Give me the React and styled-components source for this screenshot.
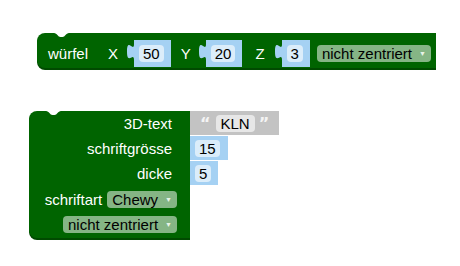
import React from "react";
import styled, { createGlobalStyle } from "styled-components";

const Global = createGlobalStyle`
  html, body { margin: 0; padding: 0; background: #ffffff; }
  body { font-family: "Liberation Sans", Arial, sans-serif; }
`;

const GREEN = "#006400";
const GREEN_SHADOW = "#004a00";
const BLUE = "#a5d1f3";
const GRAY = "#c3c3c3";

const Canvas = styled.div`
  position: relative;
  width: 460px;
  height: 266px;
  overflow: hidden;
`;

const BlockPos = styled.div`
  position: absolute;
  left: ${(p) => p.$x}px;
  top: ${(p) => p.$y}px;
`;

const GreenBlock = styled.div`
  position: relative;
  background: ${GREEN};
  border-radius: 8px 0 0 8px;
  box-shadow: 0 2px 0 ${GREEN_SHADOW};
  color: #fff;
  font-size: 15px;
`;

const NotchSvg = styled.svg`
  position: absolute;
  top: 0;
  left: ${(p) => p.$offset}px;
  display: block;
`;

const Notch = ({ offset }) => (
  <NotchSvg $offset={offset} width="15" height="5" viewBox="0 0 15 5">
    <path d="M0 0 C3 0 4 4 6.5 4 L8.5 4 C11 4 12 0 15 0 Z" fill="#ffffff" />
  </NotchSvg>
);

const InlineRow = styled.div`
  display: flex;
  align-items: center;
  height: 35px;
  padding: 6px 5px 1px 11px;
  box-sizing: border-box;
`;

const Label = styled.span`
  display: inline-block;
  margin-left: ${(p) => p.$ml || 0}px;
  color: #fff;
  font-size: 15px;
  line-height: 17px;
  white-space: nowrap;
`;

const Slot = styled.div`
  display: flex;
  align-items: flex-start;
  margin-left: ${(p) => p.$ml || 0}px;
  flex-shrink: 0;
`;

const TabSvg = styled.svg`
  display: block;
  margin-top: 4px;
  flex-shrink: 0;
`;

const Tab = ({ color }) => (
  <TabSvg width="7" height="16" viewBox="0 0 7 16">
    <path d="M7 0 C7 9 0 -7 0 7.5 S7 7 7 16 Z" fill={color} />
  </TabSvg>
);

const ValueBody = styled.div`
  display: flex;
  align-items: center;
  height: ${(p) => p.$h}px;
  padding: 0 ${(p) => p.$pr}px 0 ${(p) => p.$pl}px;
  background: ${(p) => p.$bg};
  box-sizing: border-box;
  color: #000;
`;

const EditField = styled.span`
  display: inline-flex;
  align-items: center;
  height: 17px;
  padding: 0 ${(p) => p.$px || 4}px;
  border-radius: 4px;
  background: rgba(255, 255, 255, 0.6);
  color: #000;
  font-size: 15px;
  line-height: 17px;
  white-space: nowrap;
`;

const Quote = styled.span`
  display: inline-block;
  color: #f4f4f4;
  font-family: "DejaVu Sans", "Liberation Sans", sans-serif;
  font-size: 16px;
  font-weight: bold;
  line-height: 17px;
  height: 17px;
  margin: 0 ${(p) => p.$mr || 0}px 0 ${(p) => p.$ml || 0}px;
`;

const Dropdown = styled.span`
  display: inline-flex;
  align-items: center;
  height: 17px;
  padding: 0 5px 0 5px;
  margin-left: ${(p) => p.$ml || 0}px;
  border-radius: 4px;
  background: rgba(255, 255, 255, 0.52);
  color: #000;
  font-size: 15px;
  line-height: 17px;
  white-space: nowrap;
  flex-shrink: 0;
`;

const Arrow = styled.span`
  margin-left: 7px;
  font-size: 7px;
  line-height: 17px;
  color: #e8f3e8;
`;

const NumberBlock = ({ value, ml, h = 27, pl = 5, pr = 7 }) => (
  <Slot $ml={ml}>
    <Tab color={BLUE} />
    <ValueBody $bg={BLUE} $h={h} $pl={pl} $pr={pr}>
      <EditField>{value}</EditField>
    </ValueBody>
  </Slot>
);

const Drop = ({ children, ml }) => (
  <Dropdown $ml={ml}>
    {children}
    <Arrow>▼</Arrow>
  </Dropdown>
);

/* block 2 */
const TextBlock = styled.div`
  display: flex;
  align-items: flex-start;
`;

const GreenPanel = styled(GreenBlock)`
  width: 161px;
  padding-bottom: 1px;
  display: flex;
  flex-direction: column;
`;

const PanelRow = styled.div`
  display: flex;
  align-items: center;
  justify-content: flex-end;
  height: ${(p) => p.$h}px;
  padding-right: ${(p) => p.$pr}px;
  box-sizing: border-box;
`;

const Children = styled.div`
  display: flex;
  flex-direction: column;
  gap: 1px;
  margin-left: -7px;
`;

export default function App() {
  return (
    <>
      <Global />
      <Canvas>
        <BlockPos $x={37} $y={33}>
          <GreenBlock>
            <Notch offset={17} />
            <InlineRow>
              <Label>würfel</Label>
              <Label $ml={20}>X</Label>
              <NumberBlock value="50" ml={9} />
              <Label $ml={10}>Y</Label>
              <NumberBlock value="20" ml={8} />
              <Label $ml={13}>Z</Label>
              <NumberBlock value="3" ml={10} />
              <Drop ml={7}>nicht zentriert</Drop>
            </InlineRow>
          </GreenBlock>
        </BlockPos>

        <BlockPos $x={29} $y={111}>
          <TextBlock>
            <GreenPanel>
              <Notch offset={17} />
              <PanelRow $h={25} $pr={18}>
                <Label>3D-text</Label>
              </PanelRow>
              <PanelRow $h={25} $pr={18}>
                <Label>schriftgrösse</Label>
              </PanelRow>
              <PanelRow $h={25} $pr={18}>
                <Label>dicke</Label>
              </PanelRow>
              <PanelRow $h={26} $pr={13}>
                <Label>schriftart</Label>
                <Drop ml={5}>Chewy</Drop>
              </PanelRow>
              <PanelRow $h={25} $pr={13}>
                <Drop>nicht zentriert</Drop>
              </PanelRow>
            </GreenPanel>
            <Children>
              <Slot>
                <Tab color={GRAY} />
                <ValueBody $bg={GRAY} $h={24} $pl={10} $pr={10}>
                  <Quote $mr={5}>“</Quote>
                  <EditField $px={5}>KLN</EditField>
                  <Quote $ml={4}>”</Quote>
                </ValueBody>
              </Slot>
              <NumberBlock value="15" h={24} pl={5} pr={8} />
              <NumberBlock value="5" h={24} pl={5} pr={7} />
            </Children>
          </TextBlock>
        </BlockPos>
      </Canvas>
    </>
  );
}
